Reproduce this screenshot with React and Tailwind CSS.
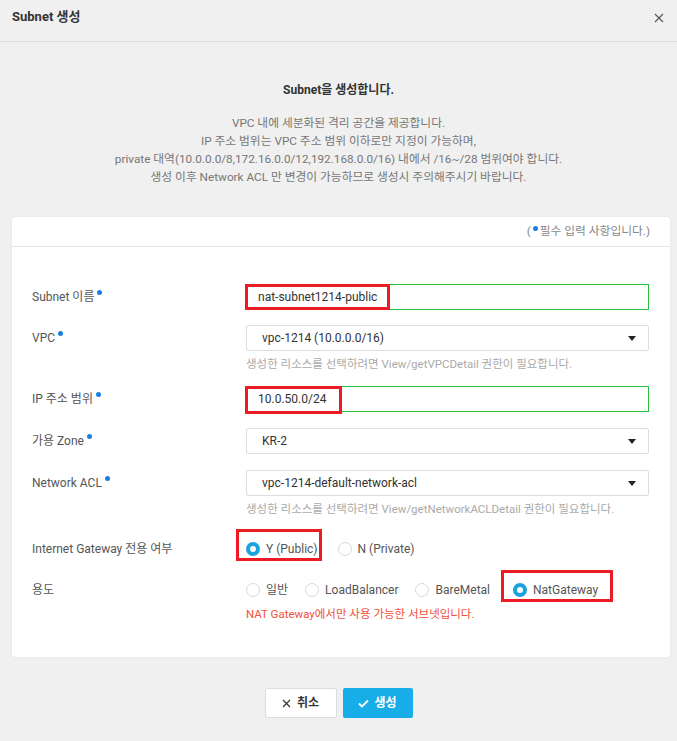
import { useState } from "react";

const font = { fontFamily: "Roboto, 'Noto Sans CJK KR', sans-serif" };

function Dot() {
  return <span className="ml-[3px] inline-block h-[5px] w-[5px] -translate-y-[5px] rounded-full bg-[#1a7fe0]" />;
}

function Arrow() {
  return (
    <svg width="8" height="5" viewBox="0 0 8 5" className="fill-[#222]">
      <path d="M0 0h8L4 5z" />
    </svg>
  );
}

function Radio({ checked, label }) {
  return (
    <label className="flex items-center gap-[6px] text-[12px] text-[#555]">
      {checked ? (
        <span className="h-[14px] w-[14px] rounded-full border-[4px] border-[#1ba3e0] bg-white" />
      ) : (
        <span className="h-[14px] w-[14px] rounded-full border border-[#d9d9d9] bg-white" />
      )}
      {label}
    </label>
  );
}

function Row({ label, required, children, className = "" }) {
  return (
    <div className={`grid grid-cols-[214px_1fr] ${className}`}>
      <div className="flex h-[26px] items-center text-[12px] text-[#555]">
        {label}
        {required && <Dot />}
      </div>
      <div>{children}</div>
    </div>
  );
}

function Select({ value }) {
  return (
    <div className="flex h-[26px] items-center justify-between rounded-[2px] border border-[#ddd] bg-white pl-[15px] pr-[12px] text-[12px] text-[#333]">
      <span>{value}</span>
      <Arrow />
    </div>
  );
}

function Helper({ children }) {
  return <p className="mt-[5px] text-[11.5px] leading-[16px] text-[#aaa]">{children}</p>;
}

export default function App() {
  const [usage] = useState("nat");

  return (
    <div className="min-h-[741px] w-full bg-[#f0f0f0]" style={font}>
      <div className="flex h-[42px] items-start justify-between border-b border-[#dcdcdc] px-[12px] pt-[8px]">
        <h1 className="text-[13px] font-bold leading-[18px] text-[#333]">Subnet 생성</h1>
        <svg width="10" height="10" viewBox="0 0 10 10" className="mt-[5px] mr-[1px] stroke-[#555]" strokeWidth="1.1">
          <path d="M1 1l8 8M9 1l-8 8" />
        </svg>
      </div>

      <div className="mt-[39px] text-center">
        <p className="text-[12px] font-bold leading-[18px] text-[#333]">Subnet을 생성합니다.</p>
        <div className="mt-[15px] text-[11.75px] leading-[18px] text-[#777]">
          <p>VPC 내에 세분화된 격리 공간을 제공합니다.</p>
          <p>IP 주소 범위는 VPC 주소 범위 이하로만 지정이 가능하며,</p>
          <p>private 대역(10.0.0.0/8,172.16.0.0/12,192.168.0.0/16) 내에서 /16~/28 범위여야 합니다.</p>
          <p>생성 이후 Network ACL 만 변경이 가능하므로 생성시 주의해주시기 바랍니다.</p>
        </div>
      </div>

      <div className="ml-[12px] mr-[7px] mt-[31px] rounded-[3px] bg-white shadow-[0_0_2px_rgba(0,0,0,0.08)]">
        <div className="flex h-[30px] items-center justify-end border-b border-[#e3e3e3] pr-[20px] text-[11.75px] text-[#888]">
          <span>
            (<span className="mx-[2px] inline-block h-[5px] w-[5px] -translate-y-[4px] rounded-full bg-[#1a7fe0]" />필수 입력 사항입니다.)
          </span>
        </div>

        <div className="pb-[35px] pl-[20px] pr-[21px] pt-[37px]">
          <Row label="Subnet 이름" required>
            <div className="relative flex h-[26px] items-center border border-[#22c03c] bg-white pl-[11px] text-[12px] text-[#333]">
              <div className="absolute -left-[2px] -top-[1px] h-[26px] w-[145px] border-[3px] border-[#ec1c24] bg-white" />
              <span className="relative">nat-subnet1214-public</span>
            </div>
          </Row>

          <Row label="VPC" required className="mt-[15px]">
            <Select value="vpc-1214 (10.0.0.0/16)" />
            <Helper>생성한 리소스를 선택하려면 View/getVPCDetail 권한이 필요합니다.</Helper>
          </Row>

          <Row label="IP 주소 범위" required className="mt-[14px]">
            <div className="relative flex h-[26px] items-center border border-[#22c03c] bg-white pl-[11px] text-[12px] text-[#333]">
              <div className="absolute -left-[2px] -top-[1px] h-[28px] w-[97px] border-[3px] border-[#ec1c24] bg-white" />
              <span className="relative">10.0.50.0/24</span>
            </div>
          </Row>

          <Row label="가용 Zone" required className="mt-[16px]">
            <Select value="KR-2" />
          </Row>

          <Row label="Network ACL" required className="mt-[16px]">
            <Select value="vpc-1214-default-network-acl" />
            <Helper>생성한 리소스를 선택하려면 View/getNetworkACLDetail 권한이 필요합니다.</Helper>
          </Row>

          <Row label="Internet Gateway 전용 여부" className="mt-[19px]">
            <div className="flex h-[26px] items-center gap-[20px]">
              <div className="relative">
                <div className="absolute -left-[10px] -top-[11px] h-[32px] w-[86px] border-[3px] border-[#ec1c24]" />
                <Radio checked label="Y (Public)" />
              </div>
              <Radio label="N (Private)" />
            </div>
          </Row>

          <Row label="용도" className="mt-[15px]">
            <div className="flex h-[26px] items-center gap-[17px]">
              <Radio checked={usage === "normal"} label="일반" />
              <Radio checked={usage === "lb"} label="LoadBalancer" />
              <Radio checked={usage === "bm"} label="BareMetal" />
              <div className="relative ml-[6px]">
                <div className="absolute -left-[12px] -top-[11px] h-[32px] w-[112px] border-[3px] border-[#ec1c24]" />
                <Radio checked={usage === "nat"} label="NatGateway" />
              </div>
            </div>
            <p className="mt-[3px] text-[11.5px] leading-[16px] text-[#f0503c]">NAT Gateway에서만 사용 가능한 서브넷입니다.</p>
          </Row>
        </div>
      </div>

      <div className="mt-[31px] flex justify-center gap-[6px] pb-[23px]">
        <button className="flex h-[30px] w-[72px] items-center justify-center gap-[6px] rounded-[2px] border border-[#ddd] bg-white text-[12px] font-bold text-[#333]">
          <svg width="9" height="9" viewBox="0 0 9 9" className="stroke-[#333]" strokeWidth="1.2">
            <path d="M1 1l7 7M8 1l-7 7" />
          </svg>
          취소
        </button>
        <button className="flex h-[30px] w-[70px] items-center justify-center gap-[5px] rounded-[2px] bg-[#17ade8] text-[12px] font-bold text-white">
          <svg width="11" height="9" viewBox="0 0 11 9" fill="none" className="stroke-white" strokeWidth="1.8">
            <path d="M1 4.5l3 3L10 1.5" />
          </svg>
          생성
        </button>
      </div>
    </div>
  );
}
